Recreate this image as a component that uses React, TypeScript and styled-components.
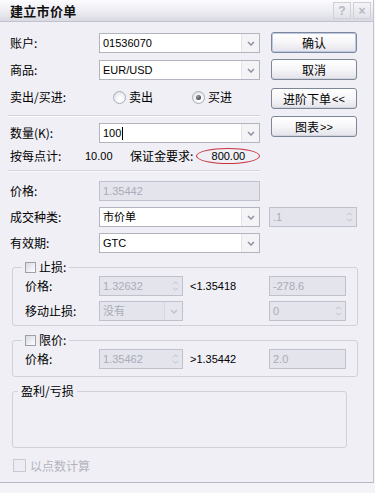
import React from "react";
import styled, { createGlobalStyle } from "styled-components";

const GlobalStyle = createGlobalStyle`
  html, body { margin: 0; padding: 0; background: #f4f4f8; }
  body { font-family: "Liberation Sans", "Noto Sans CJK SC", sans-serif; }
  *, *::before, *::after { box-sizing: border-box; }
`;

const Page = styled.div`
  width: 375px;
  height: 493px;
  overflow: hidden;
  background: #f4f4f8;
`;

const Dialog = styled.div`
  width: 374px;
  height: 483px;
  background: #efeff5;
  border-right: 1px solid #c4c4ce;
  border-bottom: 1px solid #b8b8c4;
  display: flex;
  flex-direction: column;
`;

const TitleBar = styled.div`
  height: 22px;
  flex: none;
  display: flex;
  align-items: center;
  padding: 0 2px 0 10px;
  background: linear-gradient(#fcfcfe, #ececf2 55%, #d9d9e2);
  border-bottom: 1px solid #c2c2ce;
`;

const Title = styled.span`
  flex: 1;
  font-family: "Noto Sans CJK SC", sans-serif;
  font-weight: 700;
  font-size: 13px;
  line-height: 16px;
  color: #111;
  letter-spacing: 0.3px;
`;

const TitleButton = styled.span`
  width: 18px;
  height: 17px;
  margin-left: 2px;
  border: 1px solid #cfcfd8;
  background: linear-gradient(#f4f4f8, #e2e2ea);
  color: #b6b6c2;
  font-size: 12px;
  font-weight: 700;
  font-family: "Liberation Sans", sans-serif;
  display: flex;
  align-items: center;
  justify-content: center;
`;

const Content = styled.div`
  flex: 1;
  display: flex;
  flex-direction: column;
  padding: 10px 0 0 10px;
`;

const TopSection = styled.div`
  display: flex;
`;

const LeftCol = styled.div`
  width: 250px;
  display: flex;
  flex-direction: column;
  padding-top: 1px;
`;

const ButtonCol = styled.div`
  margin-left: 11px;
  width: 86px;
  display: flex;
  flex-direction: column;
`;

const Row = styled.div<{ $mt?: number; $h?: number }>`
  display: flex;
  align-items: center;
  height: ${(p) => p.$h ?? 20}px;
  margin-top: ${(p) => p.$mt ?? 0}px;
  flex: none;
`;

const Label = styled.span<{ $w?: number; $disabled?: boolean }>`
  width: ${(p) => (p.$w === undefined ? "auto" : `${p.$w}px`)};
  flex: none;
  font-family: "Noto Sans CJK SC", sans-serif;
  font-size: 12px;
  line-height: 14px;
  color: ${(p) => (p.$disabled ? "#b3b3be" : "#000")};
  white-space: nowrap;
`;

const Value = styled.span<{ $w?: number; $pl?: number }>`
  width: ${(p) => (p.$w === undefined ? "auto" : `${p.$w}px`)};
  padding-left: ${(p) => p.$pl ?? 0}px;
  flex: none;
  font-size: 11px;
  line-height: 14px;
  color: #000;
  white-space: nowrap;
`;

const Field = styled.div<{ $w: number; $disabled?: boolean; $ml?: number }>`
  width: ${(p) => p.$w}px;
  height: 20px;
  margin-left: ${(p) => p.$ml ?? 0}px;
  flex: none;
  display: flex;
  border: 1px solid ${(p) => (p.$disabled ? "#bfc2cc" : "#b2b5be")};
  background: ${(p) => (p.$disabled ? "#e3e4ec" : "#ffffff")};
`;

const FieldText = styled.span<{ $disabled?: boolean }>`
  flex: 1;
  display: flex;
  align-items: center;
  padding-left: 3px;
  font-size: 11px;
  line-height: 18px;
  color: ${(p) => (p.$disabled ? "#a9acb8" : "#000")};
  white-space: nowrap;
  overflow: hidden;
`;

const Caret = styled.span`
  width: 1px;
  height: 13px;
  margin-left: 1px;
  background: #000;
`;

const DropButton = styled.span<{ $disabled?: boolean }>`
  width: 18px;
  flex: none;
  display: flex;
  align-items: center;
  justify-content: center;
  background: ${(p) => (p.$disabled ? "#e6e7ee" : "#f4f4f7")};
  border-left: 1px solid ${(p) => (p.$disabled ? "#d6d7de" : "#e4e4ea")};
`;

const SpinButton = styled.span`
  width: 14px;
  flex: none;
  display: flex;
  align-items: center;
  justify-content: center;
`;

const Chevron = ({ faint }: { faint?: boolean }) => (
  <svg width="8" height="5" viewBox="0 0 8 5">
    <path d="M1 1 L4 4 L7 1" fill="none" stroke={faint ? "#c0c3cc" : "#8d92a2"} strokeWidth="1.5" />
  </svg>
);

const SpinArrows = () => (
  <svg width="7" height="12" viewBox="0 0 7 12">
    <path d="M1.2 4.2 L3.5 1.8 L5.8 4.2 M1.2 7.8 L3.5 10.2 L5.8 7.8" fill="none" stroke="#bfc2cc" strokeWidth="1" />
  </svg>
);

const Combo = ({ w, text, disabled, caret }: { w: number; text: string; disabled?: boolean; caret?: boolean }) => (
  <Field $w={w} $disabled={disabled}>
    <FieldText $disabled={disabled}>
      {text}
      {caret && <Caret />}
    </FieldText>
    <DropButton $disabled={disabled}>
      <Chevron faint={disabled} />
    </DropButton>
  </Field>
);

const Spin = ({ w, text, ml }: { w: number; text: string; ml?: number }) => (
  <Field $w={w} $disabled $ml={ml}>
    <FieldText $disabled>{text}</FieldText>
    <SpinButton>
      <SpinArrows />
    </SpinButton>
  </Field>
);

const Button = styled.button<{ $mt?: number; $default?: boolean }>`
  height: 21px;
  width: 86px;
  margin: ${(p) => p.$mt ?? 0}px 0 0 0;
  padding: 0;
  flex: none;
  border: 1px solid #7d8797;
  border-radius: 3px;
  background: linear-gradient(#ffffff, #f6f6f8 50%, #e2e2ea);
  box-shadow: ${(p) => (p.$default ? "inset 0 0 0 1px #bcc8e8" : "inset 0 -1px 0 #d4d4dc")};
  font-family: "Noto Sans CJK SC", "Liberation Sans", sans-serif;
  font-size: 12px;
  line-height: 14px;
  color: #000;
  display: flex;
  align-items: center;
  justify-content: center;
`;

const Arrows = styled.span`
  font-family: "Liberation Sans", sans-serif;
  font-size: 11px;
  margin-left: 1px;
`;

const Separator = styled.div<{ $mt: number }>`
  margin: ${(p) => p.$mt}px 0 0 -2px;
  width: 252px;
  height: 2px;
  flex: none;
  border-top: 1px solid #d3d3dc;
  border-bottom: 1px solid #fbfbfd;
`;

const RadioOption = styled.span<{ $w?: number; $ml?: number }>`
  display: flex;
  align-items: center;
  width: ${(p) => (p.$w === undefined ? "auto" : `${p.$w}px`)};
  margin-left: ${(p) => p.$ml ?? 0}px;
  flex: none;
  gap: 3px;
`;

const Radio = styled.span<{ $checked?: boolean }>`
  width: 13px;
  height: 13px;
  border-radius: 50%;
  border: 1px solid #a8adba;
  background: radial-gradient(circle at 60% 65%, #ffffff 20%, #dcdde6 90%);
  position: relative;
  flex: none;
  &::after {
    content: "";
    display: ${(p) => (p.$checked ? "block" : "none")};
    position: absolute;
    left: 3px;
    top: 3px;
    width: 5px;
    height: 5px;
    border-radius: 50%;
    background: radial-gradient(circle at 40% 35%, #9a9aa2, #26262c);
  }
`;

const Ellipse = styled.span`
  width: 64px;
  height: 16px;
  margin-left: 3px;
  flex: none;
  border: 1px solid #c7323f;
  border-radius: 50%;
  display: flex;
  align-items: center;
  justify-content: center;
  font-size: 11px;
  color: #000;
`;

const CheckBox = styled.span<{ $size?: number; $disabled?: boolean }>`
  width: ${(p) => p.$size ?? 11}px;
  height: ${(p) => p.$size ?? 11}px;
  flex: none;
  border: 1px solid ${(p) => (p.$disabled ? "#c9c9d2" : "#9aa0ae")};
  background: ${(p) => (p.$disabled ? "#ececf2" : "linear-gradient(135deg, #d8d9e2, #ffffff)")};
`;

const Group = styled.fieldset<{ $w: number; $mt: number; $pb?: number; $h?: number }>`
  margin: ${(p) => p.$mt}px 0 0 2px;
  width: ${(p) => p.$w}px;
  ${(p) => (p.$h ? `height: ${p.$h}px;` : "")}
  min-width: 0;
  flex: none;
  padding: 2px 8px ${(p) => p.$pb ?? 4}px 12px;
  border: 1px solid #d0d0da;
  border-radius: 3px;
  display: flex;
  flex-direction: column;
`;

const Legend = styled.legend<{ $ml?: number }>`
  margin-left: ${(p) => p.$ml ?? -3}px;
  padding: 0 3px;
  height: 14px;
  display: flex;
  align-items: center;
  gap: 3px;
  font-family: "Noto Sans CJK SC", sans-serif;
  font-size: 12px;
  line-height: 14px;
  color: #000;
`;

const Hint = styled.span`
  width: 86px;
  padding-left: 7px;
  flex: none;
  font-size: 11px;
  color: #000;
  white-space: nowrap;
`;

const FooterRow = styled.div`
  display: flex;
  align-items: center;
  gap: 4px;
  margin: 11px 0 0 3px;
  height: 13px;
`;

export default function App() {
  return (
    <Page>
      <GlobalStyle />
      <Dialog>
        <TitleBar>
          <Title>建立市价单</Title>
          <TitleButton>?</TitleButton>
          <TitleButton>×</TitleButton>
        </TitleBar>
        <Content>
          <TopSection>
            <LeftCol>
              <Row>
                <Label $w={89}>账户:</Label>
                <Combo w={161} text="01536070" />
              </Row>
              <Row $mt={7}>
                <Label $w={89}>商品:</Label>
                <Combo w={161} text="EUR/USD" />
              </Row>
              <Row $mt={7}>
                <Label $w={89}>卖出/买进:</Label>
                <RadioOption $ml={14} $w={79}>
                  <Radio />
                  <Label>卖出</Label>
                </RadioOption>
                <RadioOption>
                  <Radio $checked />
                  <Label>买进</Label>
                </RadioOption>
              </Row>
              <Separator $mt={8} />
              <Row $mt={6}>
                <Label $w={89}>数量(K):</Label>
                <Combo w={161} text="100" caret />
              </Row>
              <Row $mt={4} $h={18}>
                <Label $w={75}>按每点计:</Label>
                <Value $w={45}>10.00</Value>
                <Label>保证金要求:</Label>
                <Ellipse>800.00</Ellipse>
              </Row>
              <Separator $mt={5} />
            </LeftCol>
            <ButtonCol>
              <Button $default>确认</Button>
              <Button $mt={6}>取消</Button>
              <Button $mt={8}>
                进阶下单<Arrows>&lt;&lt;</Arrows>
              </Button>
              <Button $mt={7}>
                图表<Arrows>&gt;&gt;</Arrows>
              </Button>
            </ButtonCol>
          </TopSection>

          <Row $mt={9}>
            <Label $w={89}>价格:</Label>
            <Field $w={161} $disabled>
              <FieldText $disabled>1.35442</FieldText>
            </Field>
          </Row>
          <Row $mt={6}>
            <Label $w={89}>成交种类:</Label>
            <Combo w={161} text="市价单" />
            <Spin w={88} ml={9} text=".1" />
          </Row>
          <Row $mt={6}>
            <Label $w={89}>有效期:</Label>
            <Combo w={161} text="GTC" />
          </Row>

          <Group $w={346} $mt={7} $pb={4}>
            <Legend>
              <CheckBox />
              止损:
            </Legend>
            <Row>
              <Label $w={74}>价格:</Label>
              <Spin w={84} text="1.32632" />
              <Hint>&lt;1.35418</Hint>
              <Field $w={77} $disabled>
                <FieldText $disabled>-278.6</FieldText>
              </Field>
            </Row>
            <Row $mt={5}>
              <Label $w={74}>移动止损:</Label>
              <Combo w={84} text="没有" disabled />
              <Spin w={77} ml={86} text="0" />
            </Row>
          </Group>

          <Group $w={346} $mt={7} $pb={7}>
            <Legend>
              <CheckBox />
              限价:
            </Legend>
            <Row>
              <Label $w={74}>价格:</Label>
              <Spin w={84} text="1.35462" />
              <Hint>&gt;1.35442</Hint>
              <Field $w={77} $disabled>
                <FieldText $disabled>2.0</FieldText>
              </Field>
            </Row>
          </Group>

          <Group $w={335} $mt={7} $h={64}>
            <Legend $ml={-7}>盈利/亏损</Legend>
          </Group>

          <FooterRow>
            <CheckBox $size={13} $disabled />
            <Label $disabled>以点数计算</Label>
          </FooterRow>
        </Content>
      </Dialog>
    </Page>
  );
}
